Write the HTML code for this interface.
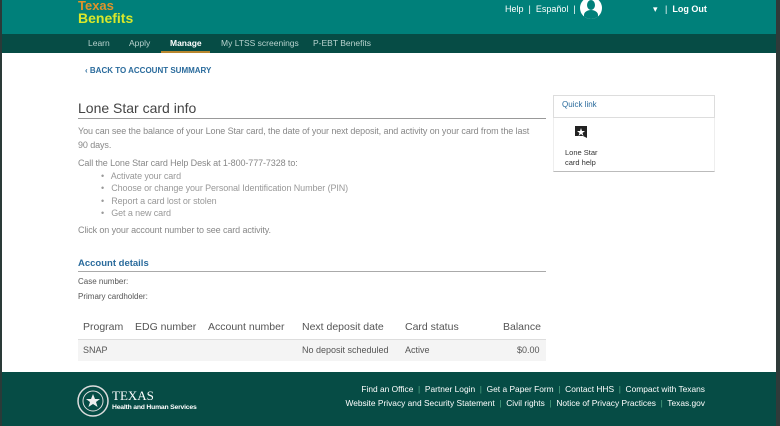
<!DOCTYPE html>
<html><head><meta charset="utf-8"><style>
*{margin:0;padding:0;box-sizing:border-box}
body{width:780px;height:426px;overflow:hidden;font-family:"Liberation Sans",sans-serif;background:#fff;position:relative;color:#666}
.hdr{position:absolute;left:0;top:0;width:780px;height:34px;background:#00807a}
.nav{position:absolute;left:0;top:34px;width:780px;height:19px;background:#064c45}
.nav span{position:absolute;top:4px;font-size:8.5px;color:#b9d3cf}
.foot{position:absolute;left:0;top:372px;width:780px;height:54px;background:#064c45}
.edgeL{position:absolute;left:0;top:0;width:2px;height:426px;background:#2a3a38}
.edgeR{position:absolute;right:0;top:0;width:4px;height:426px;background:#2f3a39}
.t{position:absolute;white-space:nowrap}
.p{font-size:9px;letter-spacing:-0.1px}
</style></head><body>
<div class="hdr">
 <div class="t" style="left:78px;top:-1px;font-size:13px;font-weight:bold;color:#e0922a;line-height:13px">Texas</div>
 <div class="t" style="left:78px;top:11px;font-size:14px;font-weight:bold;color:#d8e82a;line-height:15px">Benefits</div>
 <div class="t" style="left:505px;top:4px;font-size:9px;color:#fff">Help &nbsp;| &nbsp;Español &nbsp;|</div>
 <div style="position:absolute;left:580px;top:-3px;width:22px;height:22px;border-radius:50%;background:#fff;overflow:hidden">
  <div style="position:absolute;left:7px;top:3px;width:8px;height:10px;border-radius:50%;background:#00807a"></div>
  <div style="position:absolute;left:4px;top:13px;width:14px;height:10px;border-radius:50% 50% 0 0;background:#00807a"></div>
 </div>
 <div class="t" style="left:653px;top:4px;font-size:9px;color:#fff">▾ &nbsp;&nbsp;| &nbsp;<b>Log Out</b></div>
</div>
<div class="nav">
 <span style="left:88px">Learn</span><span style="left:129px">Apply</span>
 <span style="left:170px;color:#fff;font-weight:bold">Manage</span>
 <div style="position:absolute;left:161px;top:17px;width:49px;height:2px;background:#b8862e"></div>
 <span style="left:221px">My LTSS screenings</span><span style="left:313px">P-EBT Benefits</span>
</div>
<div class="t" style="left:85px;top:66px;font-size:8px;font-weight:bold;color:#2a6b9c">‹ BACK TO ACCOUNT SUMMARY</div>
<div class="t" style="left:78px;top:100px;font-size:14px;color:#444">Lone Star card info</div>
<div style="position:absolute;left:78px;top:118px;width:468px;height:1px;background:#999"></div>
<div class="t p" style="left:78px;top:124px;color:#888;line-height:14px">You can see the balance of your Lone Star card, the date of your next deposit, and activity on your card from the last<br>90 days.</div>
<div class="t p" style="left:78px;top:158px;color:#888">Call the Lone Star card Help Desk at 1-800-777-7328 to:</div>
<div class="t p" style="left:101px;top:170px;color:#999;line-height:12.3px">•&nbsp;&nbsp; Activate your card<br>•&nbsp;&nbsp; Choose or change your Personal Identification Number (PIN)<br>•&nbsp;&nbsp; Report a card lost or stolen<br>•&nbsp;&nbsp; Get a new card</div>
<div class="t p" style="left:78px;top:225px;color:#888">Click on your account number to see card activity.</div>
<div class="t" style="left:78px;top:258px;font-size:9.5px;font-weight:bold;color:#2a6b9c">Account details</div>
<div style="position:absolute;left:78px;top:271px;width:468px;height:1px;background:#aaa"></div>
<div class="t" style="left:78px;top:277px;font-size:8px;color:#555">Case number:</div>
<div class="t" style="left:78px;top:292px;font-size:8px;color:#555">Primary cardholder:</div>
<div style="position:absolute;left:78px;top:339px;width:468px;height:22px;background:#f4f4f4;border-top:1px solid #ddd"></div>
<div class="t" style="left:83px;top:321px;font-size:10.5px;color:#555">Program</div>
<div class="t" style="left:135px;top:321px;font-size:10.5px;color:#555">EDG number</div>
<div class="t" style="left:208px;top:321px;font-size:10.5px;color:#555">Account number</div>
<div class="t" style="left:302px;top:321px;font-size:10.5px;color:#555">Next deposit date</div>
<div class="t" style="left:405px;top:321px;font-size:10.5px;color:#555">Card status</div>
<div class="t" style="left:503px;top:321px;font-size:10.5px;color:#555">Balance</div>
<div class="t" style="left:83px;top:345px;font-size:9px;color:#555">SNAP</div>
<div class="t" style="left:302px;top:345px;font-size:9px;color:#555">No deposit scheduled</div>
<div class="t" style="left:405px;top:345px;font-size:9px;color:#555">Active</div>
<div class="t" style="left:517px;top:345px;font-size:9px;color:#555">$0.00</div>
<div style="position:absolute;left:553px;top:95px;width:162px;height:23px;border:1px solid #ddd"></div>
<div class="t" style="left:562px;top:100px;font-size:8px;color:#2a6b9c">Quick link</div>
<div style="position:absolute;left:553px;top:118px;width:162px;height:54px;border-left:1px solid #eee;border-right:1px solid #eee;border-bottom:1px solid #bbb"></div>
<svg style="position:absolute;left:574px;top:125px" width="14" height="14" viewBox="0 0 14 14"><path d="M1 1h12v12l-4-2H1z" fill="#222"/><path d="M7 3l1 3h3l-2.5 2 1 3L7 9 4.5 11l1-3L3 6h3z" fill="#fff"/></svg>
<div class="t" style="left:565px;top:148px;font-size:7.5px;color:#333;line-height:9.5px">Lone Star<br>card help</div>
<div class="foot">
 <svg style="position:absolute;left:77px;top:13px" width="32" height="32" viewBox="0 0 32 32"><circle cx="16" cy="16" r="15" fill="none" stroke="#ddd" stroke-width="1.5"/><circle cx="16" cy="16" r="10" fill="none" stroke="#ddd" stroke-width="1"/><path d="M16 9l2 5h5l-4 3 1.6 5L16 19l-4.6 3 1.6-5-4-3h5z" fill="#eee"/></svg>
 <div class="t" style="left:112px;top:16px;font-size:13px;font-family:'Liberation Serif',serif;color:#fff">TEXAS</div>
 <div class="t" style="left:112px;top:32px;font-size:6.8px;font-weight:bold;color:#fff;letter-spacing:-0.2px">Health and Human Services</div>
 <div class="t" style="right:75px;top:12px;font-size:8.4px;color:#fff">Find an Office &nbsp;<span style="color:#5a8">|</span>&nbsp; Partner Login &nbsp;<span style="color:#5a8">|</span>&nbsp; Get a Paper Form &nbsp;<span style="color:#5a8">|</span>&nbsp; Contact HHS &nbsp;<span style="color:#5a8">|</span>&nbsp; Compact with Texans</div>
 <div class="t" style="right:75px;top:26px;font-size:8.4px;color:#fff">Website Privacy and Security Statement &nbsp;<span style="color:#5a8">|</span>&nbsp; Civil rights &nbsp;<span style="color:#5a8">|</span>&nbsp; Notice of Privacy Practices &nbsp;<span style="color:#5a8">|</span>&nbsp; Texas.gov</div>
</div>
<div class="edgeL"></div><div class="edgeR"></div>
</body></html>
